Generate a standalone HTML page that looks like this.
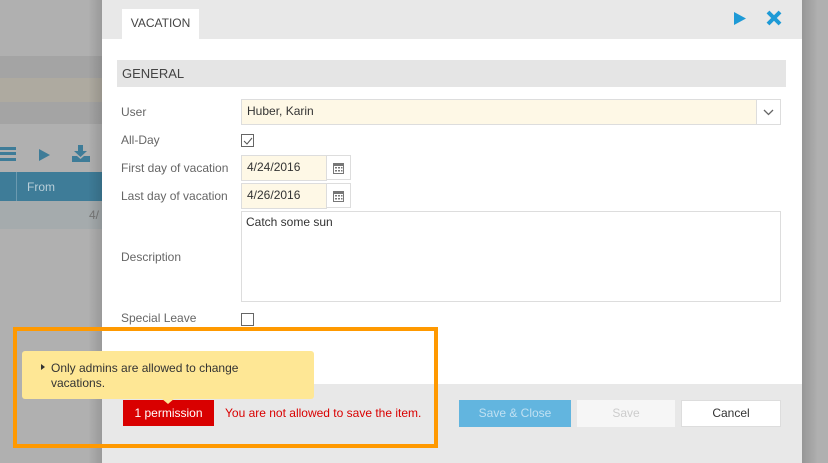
<!DOCTYPE html>
<html><head><style>
*{margin:0;padding:0;box-sizing:border-box}
body{width:828px;height:463px;overflow:hidden;position:relative;background:#b0b0b0;font-family:"Liberation Sans",sans-serif;font-size:12px;color:#333}
.a{position:absolute}
.lbl{position:absolute;left:121px;color:#666;font-size:12px}
.inp{position:absolute;border:1px solid #ddd;background:#fef8e6;padding:0 0 0 5px;line-height:23px;font-size:12px;color:#333}
.cb{position:absolute;width:13px;height:13px;border:1px solid #666;background:#fff}
.cal{position:absolute;width:25px;height:25px;border:1px solid #ddd;background:#fff}
</style></head><body>
<div class="a" style="left:0;top:56px;width:102px;height:22px;background:#a4a4a4"></div>
<div class="a" style="left:0;top:78px;width:102px;height:24px;background:#aeaaa0"></div>
<div class="a" style="left:0;top:102px;width:102px;height:22px;background:#a4a4a4"></div>
<div class="a" style="left:0;top:172px;width:102px;height:29px;background:#3e7c98"></div>
<div class="a" style="left:16px;top:172px;width:1px;height:29px;background:#6c9ab0"></div>
<div class="a" style="left:27px;top:180px;color:#b9cfd9;font-size:12px">From</div>
<div class="a" style="left:0;top:201px;width:102px;height:28px;background:#a5abad"></div>
<div class="a" style="left:89px;top:208px;color:#777">4/</div>
<div class="a" style="left:0;top:147px;width:16px;height:14px;border-top:3px solid #3e7c98;border-bottom:3px solid #3e7c98"></div>
<div class="a" style="left:0;top:152px;width:16px;height:3px;background:#3e7c98"></div>
<svg class="a" style="left:37px;top:148px" width="14" height="14"><path d="M2 1L13 7L2 13Z" fill="#3e7c98"/></svg>
<svg class="a" style="left:71px;top:145px" width="20" height="18"><path d="M7 0h5v6h4l-6.5 6L3 6h4Z M1 11h5l3.5 3 3.5-3h6v6H1Z" fill="#3e7c98"/></svg>
<div class="a" style="left:88px;top:0;width:16px;height:463px;background:linear-gradient(to right,rgba(0,0,0,0),rgba(0,0,0,.15))"></div>
<div class="a" style="left:802px;top:0;width:16px;height:463px;background:linear-gradient(to right,rgba(0,0,0,.15),rgba(0,0,0,0))"></div>

<div class="a" style="left:102px;top:0;width:700px;height:463px;background:#fff">
 <div class="a" style="left:0;top:0;width:700px;height:39px;background:#e8e8e8"></div>
 <div class="a" style="left:20px;top:9px;width:77px;height:30px;background:#fff;color:#444;text-align:center;line-height:29px;font-size:12px">VACATION</div>
 <svg class="a" style="left:631px;top:11px" width="14" height="15"><path d="M1 1L13 7.5L1 14Z" fill="#1e9ad6"/></svg>
 <svg class="a" style="left:664px;top:10px" width="16" height="16"><path d="M2 2L14 14M14 2L2 14" stroke="#1e9ad6" stroke-width="4"/></svg>
 <div class="a" style="left:15px;top:60px;width:669px;height:27px;background:#e5e5e5;color:#444;line-height:27px;padding-left:5px;font-size:13px">GENERAL</div>
 <div class="a" style="left:0;top:384px;width:700px;height:79px;background:#e8e8e8"></div>
</div>
<div class="lbl" style="top:105px">User</div>
<div class="inp" style="left:241px;top:99px;width:516px;height:26px">Huber, Karin</div>
<div class="a" style="left:756px;top:99px;width:25px;height:26px;border:1px solid #ddd;background:#fff"></div>
<svg class="a" style="left:763px;top:109px" width="11" height="7"><path d="M1 1l4.5 4.5L10 1" stroke="#666" fill="none" stroke-width="1.3"/></svg>
<div class="lbl" style="top:133px">All-Day</div>
<div class="cb" style="left:241px;top:134px"></div>
<svg class="a" style="left:242px;top:135px" width="12" height="12"><path d="M2 6l3 3 5-6" stroke="#555" fill="none" stroke-width="1"/></svg>
<div class="lbl" style="top:161px">First day of vacation</div>
<div class="inp" style="left:241px;top:155px;width:86px;height:26px">4/24/2016</div>
<div class="cal" style="left:326px;top:155px"></div>
<div class="lbl" style="top:189px">Last day of vacation</div>
<div class="inp" style="left:241px;top:183px;width:86px;height:26px">4/26/2016</div>
<div class="cal" style="left:326px;top:183px"></div>
<svg class="a" style="left:332px;top:161px" width="13" height="43"><g fill="none" stroke="#777"><rect x="1.5" y="2.5" width="10" height="10"/><rect x="1.5" y="30.5" width="10" height="10"/></g><path d="M2 3h9v2H2zM2 31h9v2H2z" fill="#777"/><g fill="#777"><rect x="3" y="6" width="2" height="1.5"/><rect x="6" y="6" width="2" height="1.5"/><rect x="9" y="6" width="1.5" height="1.5"/><rect x="3" y="9" width="2" height="1.5"/><rect x="6" y="9" width="2" height="1.5"/><rect x="9" y="9" width="1.5" height="1.5"/><rect x="3" y="34" width="2" height="1.5"/><rect x="6" y="34" width="2" height="1.5"/><rect x="9" y="34" width="1.5" height="1.5"/><rect x="3" y="37" width="2" height="1.5"/><rect x="6" y="37" width="2" height="1.5"/><rect x="9" y="37" width="1.5" height="1.5"/></g></svg>
<div class="lbl" style="top:250px">Description</div>
<div class="a" style="left:241px;top:211px;width:540px;height:91px;border:1px solid #ddd;padding:3px 4px;font-size:12px">Catch some sun</div>
<div class="lbl" style="top:311px">Special Leave</div>
<div class="cb" style="left:241px;top:313px"></div>

<div class="a" style="left:123px;top:400px;width:91px;height:26px;background:#d90000;color:#fff;line-height:26px;text-align:center;font-size:12px">1 permission</div>
<div class="a" style="left:225px;top:406px;color:#d90000;font-size:12px">You are not allowed to save the item.</div>
<div class="a" style="left:459px;top:400px;width:112px;height:27px;background:#62b5df;color:#bfe0f2;text-align:center;line-height:27px">Save &amp; Close</div>
<div class="a" style="left:577px;top:400px;width:98px;height:27px;background:#f6f6f6;color:#ccc;text-align:center;line-height:27px">Save</div>
<div class="a" style="left:681px;top:400px;width:100px;height:27px;background:#fff;border:1px solid #ddd;color:#333;text-align:center;line-height:25px">Cancel</div>

<div class="a" style="left:13px;top:327px;width:425px;height:121px;border:4px solid #ff9900"></div>
<div class="a" style="left:22px;top:351px;width:292px;height:48px;background:#fee795;border-radius:3px"></div>
<div class="a" style="left:161px;top:398px;width:0;height:0;border-left:7px solid transparent;border-right:7px solid transparent;border-top:6px solid #fee795"></div>
<div class="a" style="left:41px;top:364px;width:0;height:0;border-top:3.5px solid transparent;border-bottom:3.5px solid transparent;border-left:4px solid #333"></div>
<div class="a" style="left:51px;top:361px;font-size:12px;line-height:15px;color:#333">Only admins are allowed to change<br>vacations.</div>
</body></html>
